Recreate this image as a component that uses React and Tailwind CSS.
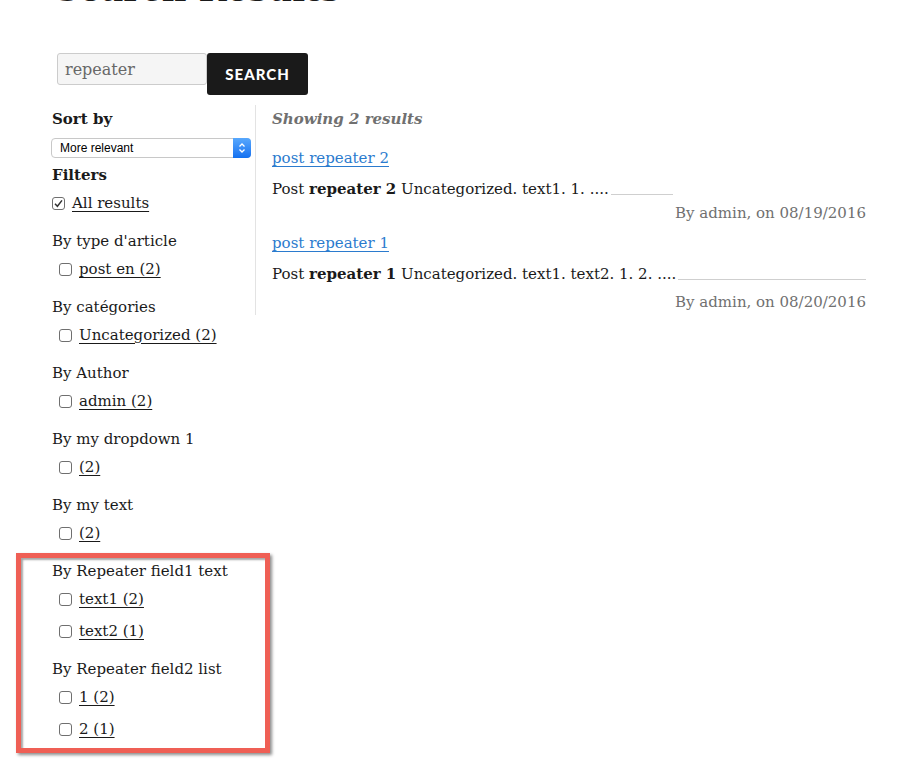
import { useState } from 'react';

const serif = { fontFamily: '"DejaVu Serif", "Liberation Serif", serif' };

function Box({ checked }) {
  return (
    <span className="inline-flex h-[13px] w-[13px] shrink-0 items-center justify-center rounded-[3px] border border-[#6f6f6f] bg-white">
      {checked && (
        <svg width="11" height="11" viewBox="0 0 11 11">
          <path d="M2 5.8 L4.4 8.3 L9 2.4" fill="none" stroke="#333" strokeWidth="1.5" />
        </svg>
      )}
    </span>
  );
}

function Item({ label, checked, first }) {
  return (
    <label className={`flex h-[24px] items-center gap-[7px] pl-[7px] ${first ? 'mt-[4px]' : 'mt-[8px]'}`}>
      <Box checked={checked} />
      <a href="#" className="text-[#1a1a1a] underline underline-offset-[3px]">{label}</a>
    </label>
  );
}

function Group({ title, items }) {
  return (
    <div className="mt-[14px]">
      <div className="h-[24px] leading-[24px]">{title}</div>
      {items.map((it, i) => (
        <Item key={it} label={it} first={i === 0} />
      ))}
    </div>
  );
}

const groups = [
  { title: "By type d'article", items: ['post en (2)'] },
  { title: 'By catégories', items: ['Uncategorized (2)'] },
  { title: 'By Author', items: ['admin (2)'] },
  { title: 'By my dropdown 1', items: ['(2)'] },
  { title: 'By my text', items: ['(2)'] },
  { title: 'By Repeater field1 text', items: ['text1 (2)', 'text2 (1)'] },
  { title: 'By Repeater field2 list', items: ['1 (2)', '2 (1)'] },
];

export default function App() {
  const [query, setQuery] = useState('repeater');

  return (
    <div className="relative min-h-[759px] overflow-hidden bg-white text-[15px] text-[#1a1a1a]" style={serif}>
      <div className="pl-[52px]">
        {/* titre coupé en haut */}
        <h1 className="-mt-[26px] h-[30px] pl-[3px] text-[34px] font-bold leading-[30px]">Search Results</h1>

        {/* recherche */}
        <form className="mt-[49px] flex items-start pl-[5px]" onSubmit={(e) => e.preventDefault()}>
          <input
            value={query}
            onChange={(e) => setQuery(e.target.value)}
            className="h-[32px] w-[150px] rounded-[3px] border border-[#cccccc] bg-[#f5f5f5] px-[7px] text-[16px] text-[#686868] outline-none"
            style={serif}
          />
          <button
            className="h-[42px] w-[101px] rounded-[3px] bg-[#1a1a1a] text-[15px] font-black tracking-[1px] text-white"
            style={{ fontFamily: 'Lato, "Open Sans", sans-serif' }}
          >
            SEARCH
          </button>
        </form>

        <div className="mt-[10px] flex items-start">
          {/* barre latérale */}
          <aside className="w-[203px] pt-[2px]">
            <div className="h-[24px] font-bold leading-[24px]">Sort by</div>
            <div
              className="mt-[7px] flex h-[20px] w-[200px] -ml-px items-center rounded-[4px] border border-[#c8c8c8] bg-white text-[12px] text-black"
              style={{ fontFamily: '"Liberation Sans", Arial, sans-serif' }}
            >
              <span className="flex-1 pl-[8px]">More relevant</span>
              <span className="-mr-px flex h-[20px] w-[18px] items-center justify-center rounded-r-[4px] bg-gradient-to-b from-[#58a8fd] to-[#1170f0]">
                <svg width="8" height="12" viewBox="0 0 8 12">
                  <path d="M1.5 4.5 L4 2 L6.5 4.5 M1.5 7.5 L4 10 L6.5 7.5" fill="none" stroke="white" strokeWidth="1.3" />
                </svg>
              </span>
            </div>
            <div className="mt-[5px] h-[24px] font-bold leading-[24px]">Filters</div>
            <label className="mt-[4px] flex h-[24px] items-center gap-[7px]">
              <Box checked />
              <a href="#" className="text-[#1a1a1a] underline underline-offset-[3px]">All results</a>
            </label>
            {groups.map((g) => (
              <Group key={g.title} title={g.title} items={g.items} />
            ))}
          </aside>

          {/* résultats */}
          <main className="w-[611px] self-start border-l border-[#e3e3e3] pb-[1px] pl-[16px] pt-[2px]">
            <div className="h-[24px] font-bold italic leading-[24px] text-[#707070]">Showing 2 results</div>

            <a href="#" className="mt-[15px] block h-[24px] leading-[24px] text-[#2b7bce] underline underline-offset-[3px]">post repeater 2</a>
            <div className="mt-[7px] flex h-[24px] items-center leading-[24px]">
              <span>Post <b>repeater 2</b> Uncategorized. text1. 1. ....</span>
              <span className="mb-[-10px] ml-[2px] w-[62px] border-b border-[#cfcfcf]" />
            </div>
            <div className="h-[24px] text-right leading-[24px] text-[#707070]">By admin, on 08/19/2016</div>

            <a href="#" className="mt-[6px] block h-[24px] leading-[24px] text-[#2b7bce] underline underline-offset-[3px]">post repeater 1</a>
            <div className="mt-[7px] flex h-[24px] items-center leading-[24px]">
              <span>Post <b>repeater 1</b> Uncategorized. text1. text2. 1. 2. ....</span>
              <span className="mb-[-10px] ml-[2px] flex-1 border-b border-[#cfcfcf]" />
            </div>
            <div className="mt-[4px] h-[24px] text-right leading-[24px] text-[#707070]">By admin, on 08/20/2016</div>
          </main>
        </div>
      </div>

      {/* cadre d'annotation rouge */}
      <div className="pointer-events-none absolute left-[16px] top-[553px] h-[200px] w-[254px] border-[5px] border-[#ef5f55] shadow-[2px_2px_3px_rgba(0,0,0,0.45),inset_2px_2px_2px_rgba(0,0,0,0.35)]" />
    </div>
  );
}
